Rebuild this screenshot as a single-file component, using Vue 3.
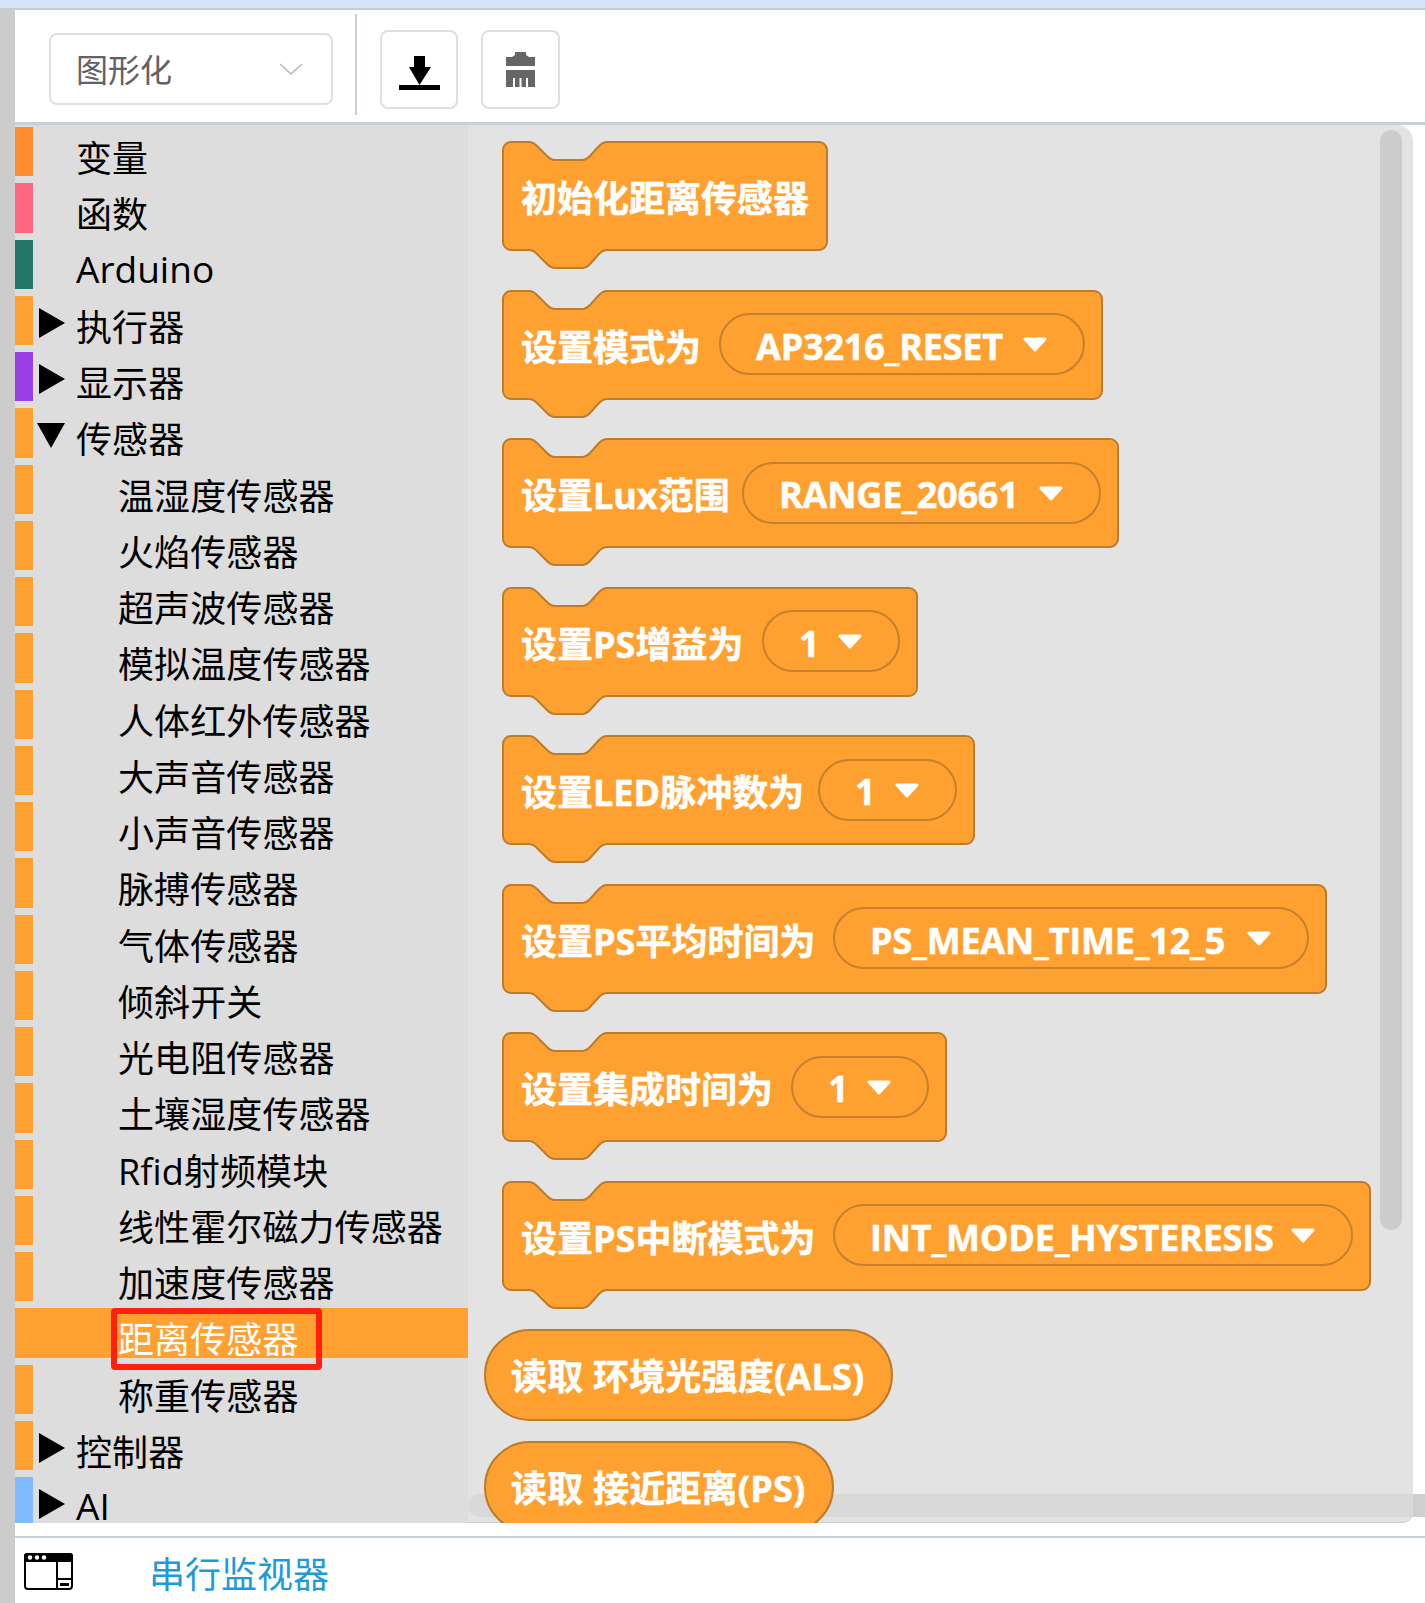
<template>
  <div class="page">
    <div class="top-band"></div>
    <div class="main">
      <div class="left-rail"></div>
      <div class="content">
        <div class="toolbar">
          <div class="mode-select">
            <span>图形化</span>
            <svg class="chevron" width="24" height="14" viewBox="0 0 24 14">
              <path d="M1 2 L12 12 L23 2" fill="none" stroke="#b4b8bf" stroke-width="1.6" />
            </svg>
          </div>
          <div class="divider"></div>
          <button class="tool-btn">
            <svg class="download-icon" width="41" height="34" viewBox="0 0 41 34">
              <path d="M15 0 H26 V11 H32 L20.500 29 L10 11 H15 Z" fill="#000" />
              <rect x="0" y="29" width="41" height="5" fill="#000" />
            </svg>
          </button>
          <button class="tool-btn second">
            <svg width="29" height="35" viewBox="0 0 29 35">
              <path d="M9 0 H20 V3 L23 5 H29 V14 H0 V5 H6 L9 3 Z" fill="#666" />
              <path d="M0 18 H29 V35 H22 V26 H20 V35 H15.500 V26 H13.500 V35 H9 V26 H7 V35 H0 Z" fill="#666" />
            </svg>
          </button>
        </div>

        <div class="editor">
          <ul class="tree">
            <li
              v-for="item in treeItems"
              :key="item.label"
              class="tree-row"
              :class="{ selected: item.selected }"
            >
              <span class="swatch" :style="{ background: item.color }"></span>
              <span v-if="item.arrow" class="arrow" :class="item.arrow"></span>
              <span class="tree-label" :class="{ child: item.child, latin: item.latin }">{{ item.label }}</span>
              <span v-if="item.selected" class="red-box"></span>
            </li>
          </ul>

          <div class="workspace-bg"></div>
          <div class="h-scroll"></div>
          <div class="v-scroll"></div>

          <div class="workspace">
            <div
              v-for="block in stackBlocks"
              :key="block.label"
              class="stack-block"
              :style="{ width: block.width + 'px' }"
            >
              <svg class="block-shape" :width="block.width + 1" height="132">
                <path :d="blockPath(block.width + 1)" fill="#ffa131" stroke="#bd7b2c" stroke-width="2" />
              </svg>
              <span class="block-text">{{ block.label }}</span>
              <span
                v-if="block.option"
                class="pill"
                :style="{ width: block.pill + 'px' }"
              >
                <span class="pill-text">{{ block.option }}</span>
                <svg width="26" height="16" viewBox="0 0 26 16">
                  <path d="M3 3 H23 L13 14 Z" fill="#fff" stroke="#fff" stroke-width="3" stroke-linejoin="round" />
                </svg>
              </span>
            </div>
            <div class="round-block first">读取 环境光强度(ALS)</div>
            <div class="round-block">读取 接近距离(PS)</div>
          </div>
        </div>

        <div class="status-gap"></div>

        <div class="footer">
          <svg width="49" height="37" viewBox="0 0 49 37">
            <rect x="1" y="1" width="47" height="35" rx="3" fill="#fff" stroke="#000" stroke-width="2" />
            <rect x="0" y="0" width="49" height="9" rx="3" fill="#000" />
            <circle cx="6" cy="4.500" r="2.200" fill="#fff" />
            <circle cx="13" cy="4.500" r="2.200" fill="#fff" />
            <circle cx="20" cy="4.500" r="2.200" fill="#fff" />
            <rect x="32" y="8" width="2" height="28" fill="#000" />
            <rect x="33" y="25" width="15" height="2" fill="#000" />
            <rect x="36" y="30" width="9" height="3" fill="#000" />
          </svg>
          <span class="serial">串行监视器</span>
        </div>
      </div>
    </div>
  </div>
</template>

<script setup>
const orange = "#ffa131"

const childNames = [
  "温湿度传感器", "火焰传感器", "超声波传感器", "模拟温度传感器", "人体红外传感器",
  "大声音传感器", "小声音传感器", "脉搏传感器", "气体传感器", "倾斜开关",
  "光电阻传感器", "土壤湿度传感器", "Rfid射频模块", "线性霍尔磁力传感器", "加速度传感器"
]

const treeItems = [
  { label: "变量", color: "#ff8c2e" },
  { label: "函数", color: "#ff6680" },
  { label: "Arduino", color: "#24786a", latin: true },
  { label: "执行器", color: orange, arrow: "right" },
  { label: "显示器", color: "#9a3ee8", arrow: "right" },
  { label: "传感器", color: orange, arrow: "down" },
  ...childNames.map((label) => ({ label, color: orange, child: true })),
  { label: "距离传感器", color: orange, child: true, selected: true },
  { label: "称重传感器", color: orange, child: true },
  { label: "控制器", color: orange, arrow: "right" },
  { label: "AI", color: "#80bbff", arrow: "right", latin: true }
]

const stackBlocks = [
  { label: "初始化距离传感器", width: 325 },
  { label: "设置模式为", width: 600, option: "AP3216_RESET", pill: 366 },
  { label: "设置Lux范围", width: 616, option: "RANGE_20661", pill: 359 },
  { label: "设置PS增益为", width: 415, option: "1", pill: 138 },
  { label: "设置LED脉冲数为", width: 472, option: "1", pill: 139 },
  { label: "设置PS平均时间为", width: 824, option: "PS_MEAN_TIME_12_5", pill: 476 },
  { label: "设置集成时间为", width: 444, option: "1", pill: 138 },
  { label: "设置PS中断模式为", width: 868, option: "INT_MODE_HYSTERESIS", pill: 520 }
]

// scratch style hat: notch on top, tab at the bottom
const blockPath = (w) => {
  const h = 110
  return `M1 9 a8 8 0 0 1 8-8 h18 c4 0 6 2 8 4 l10 10 c3 3 5 4 8 4 h27 c4 0 6-2 8-4 l9-10 c2-2 4-4 8-4 H${w - 9} a8 8 0 0 1 8 8 V${h - 9} a8 8 0 0 1 -8 8 H105 c-4 0 -6 2 -8 4 l-9 10 c-2 2 -4 4 -8 4 H53 c-3 0 -5 -1 -8 -4 l-10 -10 c-2 -2 -4 -4 -8 -4 H9 a8 8 0 0 1 -8 -8 Z`
}
</script>

<style>
html,
body {
  margin: 0;
  background: #fff;
}
</style>

<style scoped>
.page {
  width: 1425px;
  height: 1603px;
  overflow: hidden;
  font-family: "Open Sans", "Noto Sans CJK SC", sans-serif;
  color: #000;
}

.top-band {
  height: 8px;
  background: #d6e4fb;
  border-bottom: 2px solid #c8ccd2;
}

.main {
  display: flex;
  height: 1593px;
}

.left-rail {
  width: 15px;
  flex: none;
  background: #ccc;
}

.content {
  flex: 1;
  min-width: 0;
  display: flex;
  flex-direction: column;
}

.toolbar {
  height: 112px;
  flex: none;
  display: flex;
  align-items: flex-start;
  border-bottom: 3px solid #c5d0db;
  background: #fff;
}

.mode-select {
  width: 227px;
  height: 68px;
  margin: 23px 0 0 34px;
  padding: 0 28px 0 25px;
  display: flex;
  align-items: center;
  justify-content: space-between;
  border: 2px solid #dcdfe6;
  border-radius: 8px;
  font-size: 32px;
  color: #606266;
}

.mode-select span {
  margin-top: -2px;
}

.divider {
  width: 2px;
  height: 101px;
  margin: 4px 23px 0 22px;
  background: #c5d0db;
}

.tool-btn {
  width: 78px;
  height: 79px;
  margin-top: 20px;
  padding: 0;
  display: flex;
  align-items: center;
  justify-content: center;
  background: #fff;
  border: 2px solid #dcdfe6;
  border-radius: 8px;
}

.tool-btn.second {
  width: 79px;
  margin-left: 23px;
}

.download-icon {
  margin-top: 6px;
}

.editor {
  position: relative;
  height: 1398px;
  flex: none;
  display: flex;
}

.tree {
  width: 453px;
  flex: none;
  margin: 0;
  padding: 2px 0 0;
  box-sizing: border-box;
  list-style: none;
  background: #ddd;
  overflow: hidden;
}

.tree-row {
  position: relative;
  display: flex;
  align-items: center;
  height: 49.25px;
  margin-bottom: 7px;
  font-size: 36px;
  line-height: 49px;
  letter-spacing: 0.1px;
}

.tree-row.selected {
  background: #ffa131;
  color: #fff;
}

.swatch {
  width: 18px;
  height: 100%;
  flex: none;
}

.arrow {
  position: absolute;
  left: 24px;
  top: 12px;
  width: 0;
  height: 0;
}

.arrow.right {
  border-left: 26px solid #000;
  border-top: 15px solid transparent;
  border-bottom: 15px solid transparent;
}

.arrow.down {
  left: 22px;
  top: 15px;
  border-top: 25px solid #000;
  border-left: 14.5px solid transparent;
  border-right: 14.5px solid transparent;
}

.tree-label {
  position: relative;
  top: 7px;
  margin-left: 43px;
  white-space: nowrap;
}

.tree-label.child {
  margin-left: 85px;
}

.tree-label.latin {
  top: 4px;
  font-size: 37px;
  letter-spacing: 0;
}

.red-box {
  position: absolute;
  left: 96px;
  top: 0;
  width: 199px;
  height: 50px;
  border: 6px solid #ff2010;
  border-radius: 4px;
}

.workspace-bg {
  position: absolute;
  left: 453px;
  top: 0;
  bottom: 0;
  width: 945px;
  box-sizing: border-box;
  background: #e3e3e3;
  border-bottom: 1px solid #ccc;
  border-radius: 0 16px 10px 0;
}

.workspace {
  position: relative;
  width: 945px;
  flex: none;
  padding: 16px 0 0 17px;
  box-sizing: border-box;
  overflow: hidden;
  font-weight: 700;
  color: #fff;
  font-size: 36px;
  -webkit-text-stroke: 0.5px #fff;
}

.stack-block {
  position: relative;
  display: flex;
  align-items: center;
  justify-content: space-between;
  height: 109.5px;
  margin: 0 0 39px 18px;
  padding: 0 18px;
  box-sizing: border-box;
  white-space: nowrap;
}

.block-shape {
  position: absolute;
  left: -1px;
  top: 0;
  overflow: visible;
}

.block-text {
  position: relative;
  top: 1px;
}

.pill {
  position: relative;
  display: flex;
  align-items: center;
  justify-content: space-between;
  height: 62px;
  padding: 0 35px 0 35px;
  box-sizing: border-box;
  border: 2px solid #c4812f;
  border-radius: 31px;
}

.pill-text {
  position: relative;
  top: 2px;
  letter-spacing: -0.2px;
}

.round-block {
  display: table;
  height: 92px;
  margin: 0 0 20px -1px;
  padding: 3px 27px 0 25px;
  line-height: 85px;
  letter-spacing: 0.2px;
  white-space: nowrap;
  background: #ffa131;
  border: 2px solid #bd7b2c;
  box-sizing: border-box;
  border-radius: 46px;
}

.v-scroll {
  position: absolute;
  left: 1365px;
  top: 5px;
  width: 22px;
  height: 1100px;
  border-radius: 11px;
  background: #ccc;
}

.h-scroll {
  position: absolute;
  left: 453px;
  right: 0;
  top: 1369px;
  height: 23px;
  border-radius: 11px 0 0 11px;
  background: linear-gradient(90deg, #d9d9d9 945px, #cfcfcf 945px);
}

.status-gap {
  height: 13px;
  flex: none;
  background: #fff;
  border-bottom: 2px solid #c5d0db;
}

.footer {
  flex: 1;
  display: flex;
  align-items: flex-start;
  padding: 15px 0 0 9px;
  background: #fff;
}

.serial {
  margin: -3px 0 0 76px;
  font-size: 36px;
  line-height: 49px;
  color: #1e9bd7;
}
</style>
